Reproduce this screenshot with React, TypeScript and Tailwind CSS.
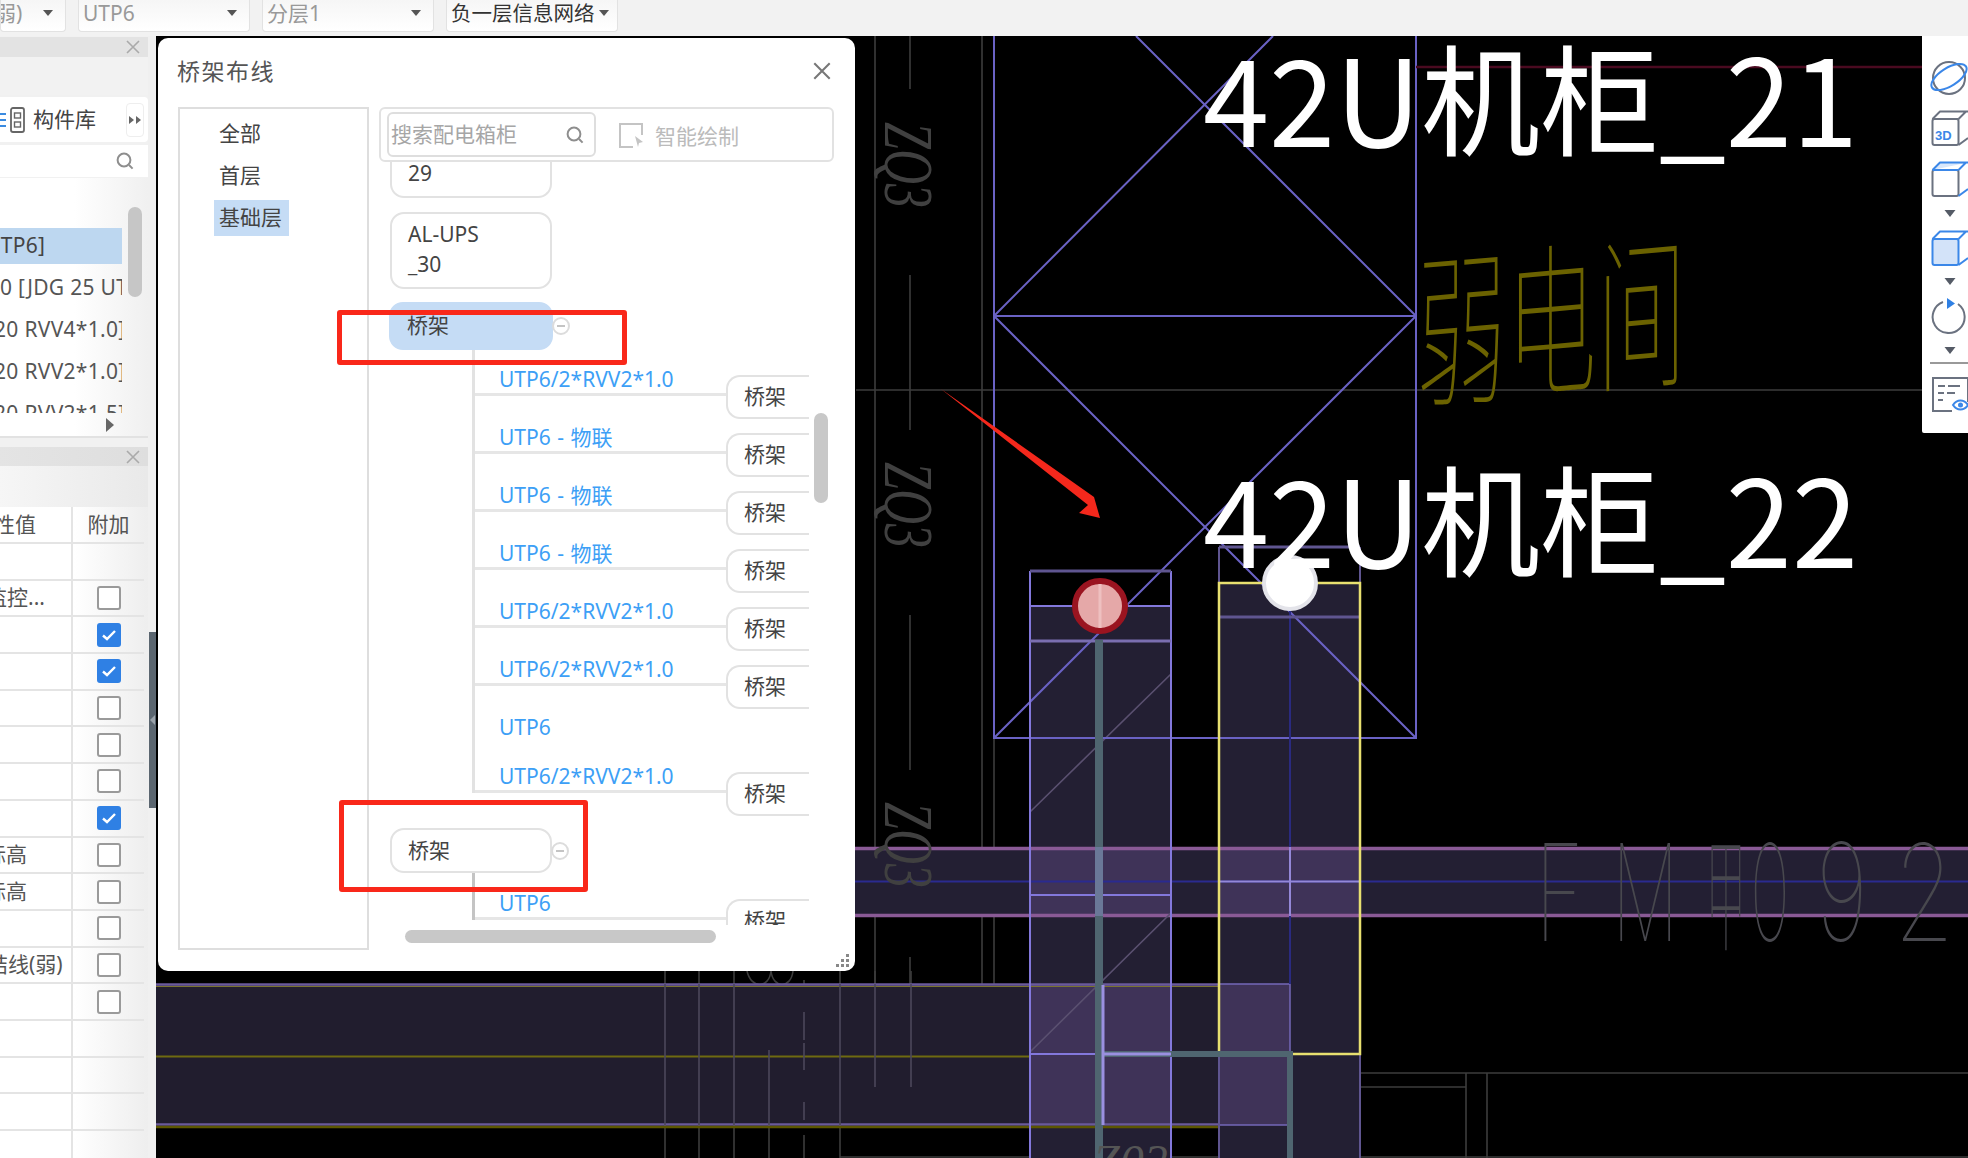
import React from "react";

const cjk = "'Noto Sans CJK SC','Noto Sans',sans-serif";

function Caret({ className = "" }: { className?: string }) {
  return (
    <svg width="10" height="6" viewBox="0 0 10 6" className={`shrink-0 ${className}`}>
      <path d="M0 0h10L5 6z" fill="#555" />
    </svg>
  );
}

function Sel({ w, text, dark, clip }: { w: string; text: string; dark?: boolean; clip?: boolean }) {
  return (
    <div className={`${w} h-8 shrink-0 flex items-center justify-between bg-gradient-to-b from-[#f6f6f6] to-white border border-t-0 border-[#e2e2e2] rounded-b-[4px] pb-[5px] overflow-hidden ${clip ? "pr-3" : "pl-1"} ${dark ? "pr-2" : "pr-3"}`}>
      <span className={`leading-[26px] whitespace-nowrap ${dark ? "text-[#333] text-[20.5px]" : "text-[#999] text-[21px]"} ${clip ? "-ml-[6px]" : ""}`}>{text}</span>
      <Caret />
    </div>
  );
}

function X({ size = 14, color = "#aaa" }: { size?: number; color?: string }) {
  return (
    <svg width={size} height={size} viewBox="0 0 14 14">
      <path d="M1 1l12 12M13 1L1 13" stroke={color} strokeWidth="1.6" fill="none" />
    </svg>
  );
}

function Magnifier({ size = 18 }: { size?: number }) {
  return (
    <svg width={size} height={size} viewBox="0 0 18 18" fill="none" stroke="#8e8e8e" strokeWidth="2">
      <circle cx="8" cy="8" r="6.4" />
      <path d="M13 13l3.6 3.6" />
    </svg>
  );
}

function Check({ on }: { on?: boolean }) {
  return on ? (
    <div className="w-6 h-6 rounded-[3px] bg-[#2f80e4] flex items-center justify-center">
      <svg width="16" height="12" viewBox="0 0 16 12" fill="none">
        <path d="M2 6.5l4 3.5 8-8" stroke="#fff" strokeWidth="2.4" />
      </svg>
    </div>
  ) : (
    <div className="w-6 h-6 rounded-[3px] border-2 border-[#9a9a9a] bg-white" />
  );
}

const tableRows: { t?: string; ml?: string; c?: boolean; on?: boolean }[] = [
  {},
  { t: "监控...", ml: "-ml-[14px]", c: true },
  { c: true, on: true },
  { c: true, on: true },
  { c: true },
  { c: true },
  { c: true },
  { c: true, on: true },
  { t: "标高", ml: "-ml-[15px]", c: true },
  { t: "标高", ml: "-ml-[15px]", c: true },
  { c: true },
  { t: "结线(弱)", ml: "-ml-[13px]", c: true },
  { c: true },
  {},
  {},
  {},
  {},
];

function LeftPanel() {
  return (
    <aside className="w-[148px] shrink-0 h-full flex flex-col bg-[#f1f1f1] overflow-hidden text-[#555]">
      <div className="h-5 shrink-0 mt-px bg-[#e3e3e3] flex items-center justify-end pr-[8px]">
        <X />
      </div>
      <div className="h-[38px] shrink-0 bg-[#f2f2f2]" />
      <div className="h-[45px] shrink-0 mt-[2px] bg-white flex items-center rounded-r-[4px]">
        <svg width="25" height="28" viewBox="0 0 25 28" fill="none" className="shrink-0">
          <path d="M0 8h6M0 14h6M0 20h6" stroke="#3b8be0" strokeWidth="2" />
          <rect x="11" y="2" width="13" height="24" rx="2" stroke="#666" strokeWidth="1.8" />
          <rect x="14.5" y="7" width="6" height="5" stroke="#666" strokeWidth="1.4" />
          <rect x="14.5" y="16" width="6" height="5" stroke="#666" strokeWidth="1.4" />
        </svg>
        <span className="ml-2 text-[21px] text-[#444] whitespace-nowrap">构件库</span>
        <div className="ml-auto mr-[4px] w-[18px] h-[34px] bg-white border border-[#eee] rounded-[4px] flex items-center justify-center">
          <svg width="12" height="8" viewBox="0 0 12 8">
            <path d="M0 0l5 4-5 4zM7 0l5 4-5 4z" fill="#666" />
          </svg>
        </div>
      </div>
      <div className="h-8 shrink-0 mt-[3px] bg-white flex items-center justify-end pr-[14px]">
        <Magnifier />
      </div>
      <div className="relative h-[260px] shrink-0 mt-px bg-gradient-to-r from-white via-white to-[#f0f0f0] border-b-2 border-[#e2e2e2]">
        <div className="h-[235px] w-[122px] overflow-hidden pt-[47px] text-[21px] tracking-[0.3px] whitespace-nowrap">
          <div className="h-[42px] flex items-center">
            <div className="h-9 w-full bg-[#bdd7f0] flex items-center text-[#444]"><span className="-ml-[15px]">UTP6]</span></div>
          </div>
          <div className="h-[42px] flex items-center">0 [JDG 25 UTP6]</div>
          <div className="h-[42px] flex items-center"><span className="-ml-[6px]">20 RVV4*1.0]</span></div>
          <div className="h-[42px] flex items-center"><span className="-ml-[6px]">20 RVV2*1.0]</span></div>
          <div className="h-[42px] flex items-center"><span className="-ml-[6px]">20 RVV2*1.5]</span></div>
        </div>
        <div className="absolute left-[128px] top-[29px] w-[14px] h-[90px] rounded-full bg-[#c6c6c6]" />
        <svg width="8" height="14" viewBox="0 0 8 14" className="absolute left-[106px] top-[240px]">
          <path d="M0 0l8 7-8 7z" fill="#666" />
        </svg>
      </div>
      <div className="h-[19px] shrink-0 mt-[9px] bg-gradient-to-r from-[#e4e4e4] to-[#dedede] flex items-center justify-end pr-[8px]">
        <X />
      </div>
      <div className="h-[41px] shrink-0 bg-gradient-to-r from-[#f6f6f6] to-[#e9e9e9]" />
      <div className="flex-1 shrink-0 bg-gradient-to-r from-white via-white to-[#eeeeee] pr-[4px]">
        <div className="h-[37px] flex border-b-2 border-[#e4e4e4] text-[21px]">
          <div className="w-[73px] border-r-2 border-[#e4e4e4] overflow-hidden flex items-center whitespace-nowrap">
            <span className="-ml-[6px]">性值</span>
          </div>
          <div className="flex-1 flex items-center justify-center">附加</div>
        </div>
        {tableRows.map((r, i) => (
          <div key={i} className="h-[36.7px] flex border-b-2 border-[#e4e4e4] text-[21px]">
            <div className="w-[73px] border-r-2 border-[#e4e4e4] overflow-hidden flex items-center whitespace-nowrap">
              {r.t && <span className={r.ml}>{r.t}</span>}
            </div>
            <div className="flex-1 flex items-center justify-center">{r.c && <Check on={r.on} />}</div>
          </div>
        ))}
      </div>
    </aside>
  );
}

function Splitter() {
  return (
    <div className="w-2 shrink-0 h-full relative bg-[#f0f0f0]">
      <div className="absolute left-px top-[596px] w-[7px] h-[176px] bg-[#5b6670] flex items-center justify-center">
        <svg width="5" height="10" viewBox="0 0 5 10"><path d="M5 0L0 5l5 5z" fill="#9aa2aa" /></svg>
      </div>
    </div>
  );
}

function Drawing() {
  const A = "#8378dc";
  const fill = "#231f33";
  const over = "#3f3358";
  const gray = "#3c3c3c";
  const violet = "#6a62c4";
  return (
    <svg className="absolute inset-0" width="1812" height="1122" viewBox="156 36 1812 1122">
      {/* grey construction lines */}
      <g stroke={gray} strokeWidth="1.6" fill="none">
        <path d="M875 36V1125M982 36V1125M856 390H1925" />
        <path d="M910 36V89M910 275V430M910 615V770M910 957V1086" />
        <path d="M994 738V1073H1968M1466 1073V1158M1487 1073V1158M840 1087H1466M840 1157H1968" />
        <path d="M665 971V1158M699 971V1158M734 971V1158M769 1050V1158M840 971V1158M875 971V1087M911 971V1087" />
        <path d="M804 980V1010M804 1012V1040M804 1043V1070M804 1102V1120M804 1135V1158" />
        <path d="M747 971c4 18 22 18 24 0M771 971c2 18 20 18 22 0" />
      </g>
      {/* columns */}
      <rect x="1030" y="606" width="141" height="552" fill={fill} />
      <rect x="1219" y="583" width="141" height="575" fill={fill} />
      {/* horizontal band */}
      <rect x="855" y="847" width="1113" height="69" fill={fill} />
      <rect x="1030" y="847" width="141" height="69" fill={over} />
      <rect x="1219" y="847" width="141" height="69" fill={over} />
      <path d="M855 848.5H1968M855 915.5H1968" stroke="#8a5a96" strokeWidth="3.5" fill="none" />
      <path d="M855 881.5H1968" stroke="#2a2a90" strokeWidth="2" fill="none" />
      {/* bottom band */}
      <rect x="156" y="984" width="1063" height="141" fill="#211d2e" />
      <rect x="1030" y="985" width="141" height="140" fill={over} />
      <rect x="1219" y="984" width="71" height="141" fill={over} stroke="#7468b8" strokeWidth="1.5" />
      <path d="M156 984.5H1219M156 1124.5H1219" stroke="#6a5a9a" strokeWidth="2.5" fill="none" />
      <path d="M156 986.5H1219" stroke="#7a7430" strokeWidth="1" fill="none" />
      <path d="M156 1056.5H1030" stroke="#6f6a10" strokeWidth="2" fill="none" />
      <path d="M156 1127H1219" stroke="#5c5600" strokeWidth="2.5" fill="none" />
      {/* grey lines over band */}
      <g stroke="#4c485a" strokeWidth="1.6" fill="none">
        <path d="M665 984V1125M699 984V1125M734 984V1125M769 1050V1125M840 984V1125M875 984V1087M911 984V1087M804 1012V1040M804 1043V1070M804 1102V1120" />
        <path d="M1171 674L1030 812M1171 913L1030 1052" stroke="#5a5070" />
      </g>
      {/* cable tray X */}
      <g stroke={violet} strokeWidth="2" fill="none">
        <path d="M994 36V738H1416V36" />
        <path d="M994 316H1416" />
        <path d="M994 316L1273 36M1416 316L1136 36M994 316L1416 738M1416 316L994 738" />
      </g>
      <path d="M1416 67H1922" stroke="#4a0a20" strokeWidth="2.5" />
      {/* column outlines */}
      <path d="M1030 571V1158M1171 571V1158" stroke={A} strokeWidth="2" fill="none" />
      <path d="M1030 571H1171" stroke="#5f5590" strokeWidth="3" />
      <path d="M1030 606H1171M1030 895H1171M1030 1054H1171" stroke={A} strokeWidth="2" />
      <path d="M1030 641H1171" stroke="#7a6eb0" strokeWidth="3" />
      <path d="M1219 547H1360" stroke="#5f5590" strokeWidth="3" />
      <path d="M1219 547V583M1360 547V583M1219 1054V1158M1360 1054V1158" stroke="#5f5590" strokeWidth="2" />
      <path d="M1290 583V847M1290 916V984" stroke="#2a2a80" strokeWidth="2" />
      <path d="M1290 847V916M1219 881.5H1360" stroke="#9488d8" strokeWidth="2" />
      <path d="M1219 617H1360" stroke="#5f5590" strokeWidth="3" />
      <rect x="1219" y="583" width="141" height="471" fill="none" stroke="#e8e070" strokeWidth="2.5" />
      {/* conduit */}
      <path d="M1099 640V1158" stroke="#4f6570" strokeWidth="8" fill="none" />
      <path d="M1099 1054H1290V1158" stroke="#4f6570" strokeWidth="6" fill="none" />
      <path d="M1099 847V916" stroke="#6a7898" strokeWidth="8" />
      <path d="M1103 985V1125" stroke="#9a90e0" strokeWidth="3" />
      <path d="M1103 1054H1171" stroke="#9a90e0" strokeWidth="3" />
      {/* nodes */}
      <circle cx="1100" cy="606" r="25" fill="#e5a8a8" stroke="#9a1420" strokeWidth="6" />
      <path d="M1100 584V628" stroke="#eec0c0" strokeWidth="3" />
      <circle cx="1290" cy="583" r="26" fill="#fff" stroke="#e4e4ea" strokeWidth="4" />
      {/* texts */}
      <g style={{ fontFamily: "'Liberation Serif',serif" }} fontStyle="italic" fill="#404040" fontSize="70">
        <text transform="translate(885,122) rotate(90)" textLength="86" lengthAdjust="spacingAndGlyphs">ZQ3</text>
        <text transform="translate(885,462) rotate(90)" textLength="86" lengthAdjust="spacingAndGlyphs">ZQ3</text>
        <text transform="translate(885,802) rotate(90)" textLength="86" lengthAdjust="spacingAndGlyphs">ZQ3</text>
      </g>
      <text x="1093" y="1178" fill="#555" fontSize="48" fontStyle="italic" style={{ fontFamily: "'Liberation Serif',serif" }}>Z02</text>
      <g fill="#fff" fontSize="120" style={{ fontFamily: cjk }}>
        <text x="1203" y="147" textLength="655" lengthAdjust="spacingAndGlyphs">42U机柜_21</text>
        <text x="1203" y="568" textLength="655" lengthAdjust="spacingAndGlyphs">42U机柜_22</text>
      </g>
      <text
        transform="translate(1416,396) skewY(-5) scale(0.74,1.36)"
        fontSize="122"
        fontWeight="100"
        fill="#6b6200"
        style={{ fontFamily: cjk }}
      >
        弱电间
      </text>
      <g fontSize="135" fontWeight="100" fill="#48484e" style={{ fontFamily: "Inter,sans-serif" }}>
        <text transform="translate(1535,941) scale(0.62,1)">F</text>
        <text transform="translate(1612,941) scale(0.55,1)">M</text>
        <text transform="translate(1750,941) scale(0.5,1)">0</text>
        <text transform="translate(1816,941) scale(0.68,1)">9</text>
        <text transform="translate(1894,941) scale(0.72,1)">2</text>
      </g>
      <text transform="translate(1706,941) scale(0.32,1)" fontSize="125" fontWeight="100" fill="#48484e" style={{ fontFamily: cjk }}>甲</text>
      {/* annotation arrow */}
      <polygon points="941,389 1094,497 1100,518 1079,513 1088,505" fill="#f4281c" />
    </svg>
  );
}

function Node({ children, sel, rightOpen, badge, className = "" }: { children: React.ReactNode; sel?: boolean; rightOpen?: boolean; badge?: boolean; className?: string }) {
  return (
    <div className={`relative flex items-center px-4 text-[21px] text-[#444] ${sel ? "bg-[#c5dcf5] border-[#c5dcf5]" : "bg-white border-[#e2e2e2]"} border-2 ${rightOpen ? "border-r-0 rounded-l-[14px]" : "rounded-[14px]"} ${className}`}>
      {children}
      {badge && (
        <div className="absolute -right-[19px] top-1/2 -translate-y-1/2 w-[18px] h-[18px] rounded-full border-2 border-[#dcdcdc] bg-white flex items-center justify-center">
          <div className="w-2 h-[2px] bg-[#c4c4c4]" />
        </div>
      )}
    </div>
  );
}

function Branch({ h, label, node = true, line = true }: { h: string; label: string; node?: boolean; line?: boolean }) {
  return (
    <div className={`${h} flex items-end`}>
      <div className={`w-[251px] h-full flex items-end pl-[24px] pb-px text-[21px] leading-[26px] text-[#3d9ff6] whitespace-nowrap [word-spacing:1px] ${line ? "border-b-[3px] border-[#e6e6e6]" : "border-b-[3px] border-transparent"}`}>
        <span>{label}</span>
      </div>
      {node && (
        <Node rightOpen className="w-[83px] h-[44px] -mb-[23px] shrink-0 z-10">桥架</Node>
      )}
    </div>
  );
}

function Dialog() {
  return (
    <div className="absolute left-[2px] top-[2px] w-[697px] h-[933px] bg-white rounded-[10px] text-[#444] overflow-hidden">
      <div className="h-[69px] flex items-center justify-between pl-[19px] pr-[24px] pb-[3px]">
        <span className="text-[23px] tracking-[1.5px] text-[#555]">桥架布线</span>
        <X size={18} color="#777" />
      </div>
      <div className="flex pl-5 pr-[21px] gap-[10px]">
        <div className="w-[191px] h-[843px] shrink-0 border-2 border-[#dedede] pl-[34px] pt-[4px] text-[21px]">
          <div className="h-[42px] flex items-center pl-[5px]">全部</div>
          <div className="h-[42px] flex items-center pl-[5px]">首层</div>
          <div className="h-9 w-[75px] mt-[3px] flex items-center pl-[5px] bg-[#c5dcf5]">基础层</div>
        </div>
        <div className="flex-1 min-w-0">
          <div className="h-[55px] border-2 border-[#e2e2e2] rounded-[6px] flex items-center pl-[6px]">
            <div className="w-[209px] h-[45px] border-2 border-[#dedede] rounded-[6px] flex items-center justify-between pl-[2px] pr-[10px]">
              <span className="text-[21px] text-[#a6a6a6] whitespace-nowrap">搜索配电箱柜</span>
              <Magnifier />
            </div>
            <svg width="26" height="26" viewBox="0 0 26 26" fill="none" className="ml-[22px]">
              <path d="M15 25H2V2h22v11" stroke="#c4c4c4" strokeWidth="2" />
              <path d="M17 14l8 6-4 1-1 4z" fill="#c4c4c4" />
            </svg>
            <span className="ml-[11px] mt-[4px] text-[21px] text-[#bbb] whitespace-nowrap">智能绘制</span>
          </div>
          <div className="h-[763px] w-[430px] overflow-hidden">
            <div className="ml-[11px] w-[162px] h-9 border-2 border-t-0 border-[#e2e2e2] rounded-b-[14px] pl-4 text-[21px] leading-[22px]">29</div>
            <Node className="ml-[11px] w-[162px] h-[77px] mt-[14px] leading-[30px] pb-[3px]">
              <span>AL-UPS<br />_30</span>
            </Node>
            <Node sel badge className="ml-[10px] w-[164px] h-[48px] mt-[13px]">桥架</Node>
            <div className="ml-[93px] border-l-[3px] border-[#e2e2e2] mb-[35px]">
              <Branch h="h-[46px]" label="UTP6/2*RVV2*1.0" />
              <Branch h="h-[58px]" label="UTP6 - 物联" />
              <Branch h="h-[58px]" label="UTP6 - 物联" />
              <Branch h="h-[58px]" label="UTP6 - 物联" />
              <Branch h="h-[58px]" label="UTP6/2*RVV2*1.0" />
              <Branch h="h-[58px]" label="UTP6/2*RVV2*1.0" />
              <Branch h="h-[58px]" label="UTP6" node={false} line={false} />
              <Branch h="h-[49px]" label="UTP6/2*RVV2*1.0" />
            </div>
            <Node badge className="ml-[11px] w-[162px] h-[45px]">桥架</Node>
            <div className="ml-[93px] border-l-[3px] border-[#c4c4c4]">
              <Branch h="h-[47px]" label="UTP6" />
            </div>
          </div>
          <div className="mt-[5px] ml-[26px] w-[311px] h-[13px] rounded-full bg-[#c8c8c8]" />
        </div>
      </div>
      {/* vertical scrollbar */}
      <div className="absolute left-[656px] top-[375px] w-[14px] h-[90px] rounded-full bg-[#c8c8c8]" />
      {/* resize grip */}
      <svg width="14" height="14" viewBox="0 0 14 14" className="absolute right-[5px] bottom-[4px]">
        <path d="M10 1h3v3h-3zM5 6h3v3H5zM10 6h3v3h-3zM0 11h3v3H0zM5 11h3v3H5zM10 11h3v3h-3z" fill="#888" />
      </svg>
      {/* red annotation boxes */}
      <div className="absolute left-[179px] top-[272px] w-[290px] h-[55px] border-[5px] border-[#f9281a] rounded-[3px]" />
      <div className="absolute left-[181px] top-[762px] w-[249px] h-[92px] border-[5px] border-[#f9281a] rounded-[3px]" />
    </div>
  );
}

function Cube({ blueTop, filled, label }: { blueTop?: boolean; filled?: boolean; label?: boolean }) {
  const g = filled ? "#3b87e8" : "#6b7280";
  const t = blueTop || filled ? "#3b87e8" : "#6b7280";
  return (
    <svg width="46" height="36" viewBox="0 0 46 36" fill="none" strokeWidth="2" strokeLinejoin="round" className="block">
      <rect x="10.5" y="9" width="26" height="26" rx="2" stroke={g} fill={filled ? "#d3e3f9" : "none"} />
      <path d="M10.5 9L18 1.5H46M36.5 9L44 1.5" stroke={t} fill={blueTop ? "#d8e7fb" : "none"} />
      <path d="M36.5 35L46 28M36.5 9H10.5" stroke={g === "#6b7280" ? (blueTop ? "#3b87e8" : g) : g} />
      {label && <text x="13" y="30" fontSize="13" fontWeight="700" fill="#3b87e8" stroke="none" style={{ fontFamily: "'Liberation Sans',sans-serif" }}>3D</text>}
    </svg>
  );
}

function Toolbar() {
  const arrow = (cls: string) => (
    <svg width="46" height="8" viewBox="0 0 46 8" className={`block ${cls}`}>
      <path d="M28 8l-5.500-7h11z" fill="#555b66" />
    </svg>
  );
  return (
    <div className="absolute right-0 top-0 w-[46px] h-[397px] bg-white pt-6 rounded-bl-[2px]">
      <svg width="46" height="36" viewBox="0 0 46 36" fill="none" className="block">
        <circle cx="27" cy="18" r="16" stroke="#6b7280" strokeWidth="2" />
        <ellipse cx="27" cy="17" rx="20" ry="9" transform="rotate(-32 27 17)" stroke="#3b87e8" strokeWidth="2" />
      </svg>
      <div className="mt-[14px]"><Cube label /></div>
      <div className="mt-[15px]"><Cube blueTop /></div>
      {arrow("mt-[12px]")}
      <div className="mt-[13px]"><Cube filled /></div>
      {arrow("mt-[11px]")}
      <svg width="46" height="36" viewBox="0 0 46 36" fill="none" className="block mt-[13px]">
        <path d="M21 4A16 16 0 1 0 36 6" stroke="#6b7280" strokeWidth="2" />
        <path d="M25 0v11l8-5.500z" fill="#2f80e4" />
      </svg>
      {arrow("mt-[12px]")}
      <div className="mt-[8px] ml-2 h-[2px] bg-[#999]" />
      <svg width="46" height="36" viewBox="0 0 46 36" fill="none" className="block mt-3">
        <path d="M30 35H11V2h35v24" stroke="#6b7280" strokeWidth="2" />
        <path d="M16 10h7M26 10h12M16 17h6M25 17h8M16 24h5" stroke="#6b7280" strokeWidth="2" />
        <path d="M31 29c4-6 11-6 15 0-4 6-11 6-15 0z" stroke="#3b87e8" strokeWidth="2" />
        <circle cx="38.500" cy="29" r="2.500" fill="#3b87e8" />
      </svg>
    </div>
  );
}

export default function App() {
  return (
    <div className="w-[1968px] h-[1158px] overflow-hidden flex flex-col bg-[#f1f1f1] font-['Noto_Sans','Noto_Sans_CJK_SC',sans-serif]">
      <header className="h-9 shrink-0 flex gap-3 bg-[#f2f2f2]">
        <Sel w="w-[66px]" text="弱)" clip />
        <Sel w="w-[172px]" text="UTP6" />
        <Sel w="w-[172px]" text="分层1" />
        <Sel w="w-[172px]" text="负一层信息网络" dark />
      </header>
      <main className="flex-1 min-h-0 flex">
        <LeftPanel />
        <Splitter />
        <section className="relative flex-1 bg-black overflow-hidden">
          <Drawing />
          <Dialog />
          <Toolbar />
        </section>
      </main>
    </div>
  );
}
